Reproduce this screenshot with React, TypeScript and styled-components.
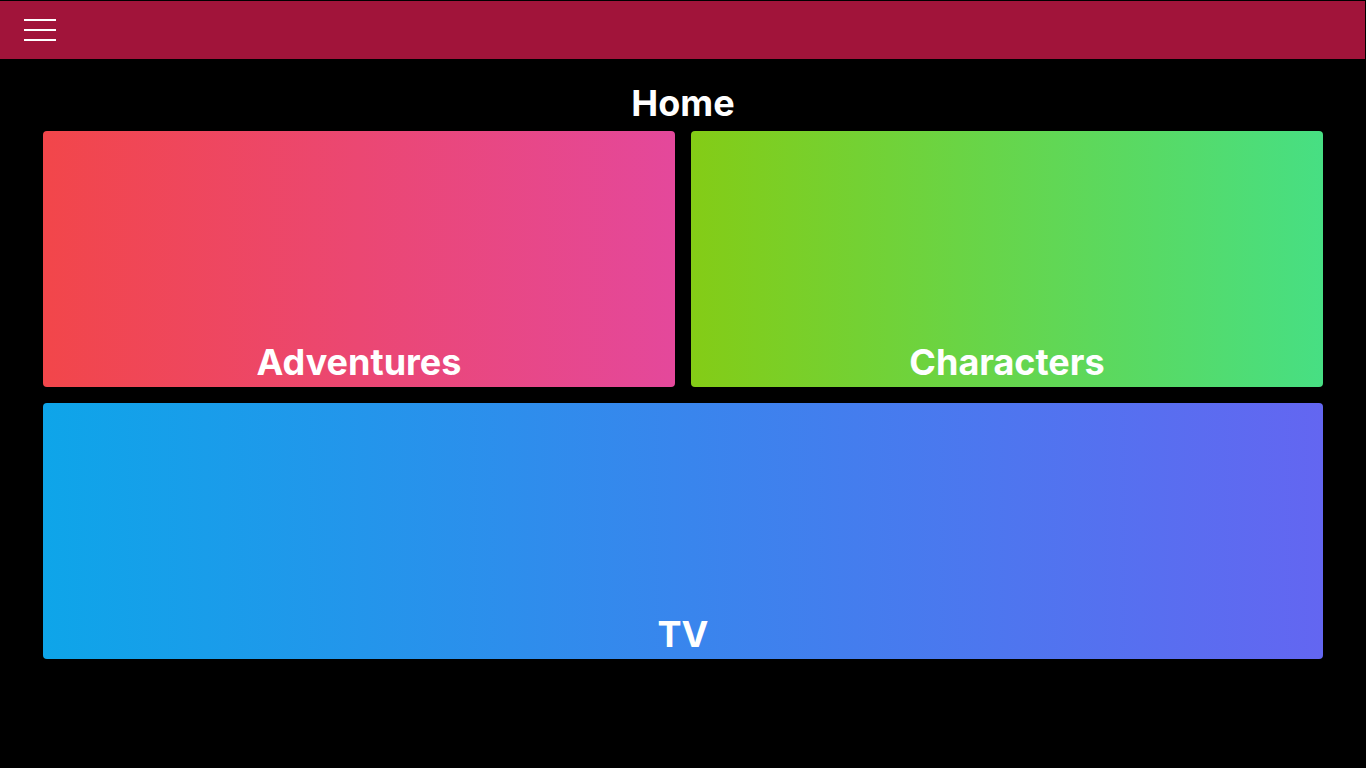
import styled, { createGlobalStyle } from "styled-components";

const GlobalStyle = createGlobalStyle`
  html, body {
    margin: 0;
    padding: 0;
    background: #000;
    font-family: Inter, "Noto Sans", sans-serif;
  }
`;

const Header = styled.header`
  height: 58px;
  background: #a1143a;
  border-top: 1px solid #000;
  border-right: 1px solid #000;
  display: flex;
  align-items: center;
  padding: 0 24px;
`;

const MenuButton = styled.button`
  width: 32px;
  height: 22px;
  padding: 0;
  border: none;
  background: none;
  display: flex;
  flex-direction: column;
  justify-content: space-between;
  cursor: pointer;
`;

const Bar = styled.span`
  display: block;
  height: 2px;
  width: 100%;
  background: #fff;
`;

const Main = styled.main`
  width: 1280px;
  margin: 0 auto;
`;

const Title = styled.h1`
  margin: 0;
  padding: 24px 0 8px;
  color: #fff;
  font-size: 36px;
  line-height: 40px;
  font-weight: 700;
  text-align: center;
`;

const Grid = styled.div`
  display: grid;
  grid-template-columns: 1fr 1fr;
  gap: 16px;
`;

const Card = styled.a<{ $from: string; $to: string; $wide?: boolean }>`
  grid-column: ${(p) => (p.$wide ? "span 2" : "auto")};
  height: 256px;
  border-radius: 4px;
  background: linear-gradient(to right, ${(p) => p.$from}, ${(p) => p.$to});
  display: flex;
  align-items: flex-end;
  justify-content: center;
  padding-bottom: 5px;
  box-sizing: border-box;
  color: #fff;
  text-decoration: none;
  font-size: 36px;
  line-height: 40px;
  font-weight: 700;
`;

export default function App() {
  return (
    <>
      <GlobalStyle />
      <Header>
        <MenuButton aria-label="menu">
          <Bar />
          <Bar />
          <Bar />
        </MenuButton>
      </Header>
      <Main>
        <Title>Home</Title>
        <Grid>
          <Card $from="#f2464a" $to="#e4489b">Adventures</Card>
          <Card $from="#84cc16" $to="#47df83">Characters</Card>
          <Card $wide $from="#0ea5e9" $to="#6366f1">TV</Card>
        </Grid>
      </Main>
    </>
  );
}
